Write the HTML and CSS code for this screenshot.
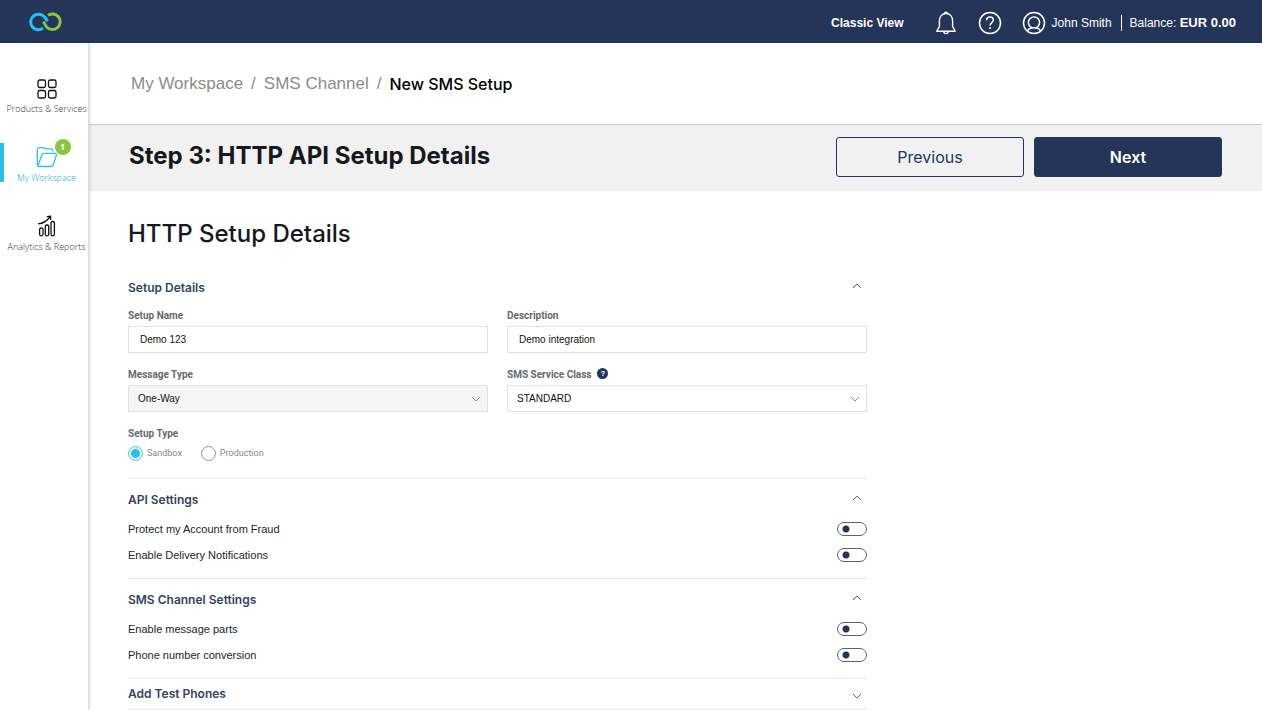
FILE: index.html
```html
<!DOCTYPE html>
<html lang="en">
<head>
<meta charset="utf-8">
<meta name="viewport" content="width=device-width, initial-scale=1">
<title>New SMS Setup</title>
<link rel="stylesheet" href="styles.css">
</head>
<body>
<header class="topbar">
  <a class="logo" href="#" aria-label="Home">
    <svg width="34" height="22" viewBox="0 0 34 22" fill="none" stroke-width="3">
      <path d="M14 17.300A7.800 7.800 0 1 1 15.200 5.600C16.600 7 17.200 8.800 18.800 10.200" stroke="#27bfee"/>
      <path d="M19 4.300A7.800 7.800 0 1 1 17.800 16.200C16.200 14.600 16 12.600 14.200 10.800" stroke="#8cc63f"/>
    </svg>
  </a>
  <nav class="topnav">
    <a class="classic" href="#">Classic View</a>
    <button class="icon-btn bell" aria-label="Notifications">
      <svg width="22" height="26" viewBox="0 0 22 26" fill="none" stroke="#fff" stroke-width="1.4" stroke-linejoin="round">
        <path d="M9.400 3.400a1.700 1.700 0 0 1 3.200 0M4.400 16.500V11C4.400 6.600 7 3.500 11 3.500s6.600 3.100 6.600 7.500v5.500l2.600 4.700H1.800zM8.700 21.300a2.300 2.300 0 0 0 4.600 0"/>
      </svg>
    </button>
    <button class="icon-btn help" aria-label="Help">
      <svg width="24" height="24" viewBox="0 0 24 24" fill="none" stroke="#fff" stroke-width="1.5">
        <circle cx="12" cy="12" r="10.500"/>
        <path d="M8.700 9.300c0-2 1.400-3.200 3.300-3.200s3.300 1.200 3.300 3c0 2.400-3.200 2.700-3.200 5.500"/>
        <path d="M12 16v2"/>
      </svg>
    </button>
    <a class="account" href="#">
      <svg width="24" height="24" viewBox="0 0 24 24" fill="none" stroke="#fff" stroke-width="1.500">
        <circle cx="12" cy="12" r="10.500"/>
        <circle cx="12" cy="11.500" r="5.600"/>
        <path d="M5.200 20c1-2 2.700-2.600 4.600-3.200M18.800 20c-1-2-2.700-2.600-4.600-3.200"/>
      </svg>
      <span>John Smith</span>
    </a>
    <span class="balance">Balance: <strong>EUR 0.00</strong></span>
  </nav>
</header>
<div class="shell">
  <nav class="sidebar">
    <a class="side-item" href="#">
      <svg width="20" height="20" viewBox="0 0 20 20" fill="none" stroke="#111" stroke-width="1.300">
        <rect x="1" y="1" width="7.500" height="7.500" rx="1.800"/><rect x="11.500" y="1" width="7.500" height="7.500" rx="1.800"/>
        <rect x="1" y="11.500" width="7.500" height="7.500" rx="1.800"/><rect x="11.500" y="11.500" width="7.500" height="7.500" rx="1.800"/>
      </svg>
      <span>Products &amp; Services</span>
    </a>
    <a class="side-item active" href="#">
      <span class="side-icon">
        <svg width="22" height="22" viewBox="0 0 22 22" fill="none" stroke="#2bbfe6" stroke-width="1.300" stroke-linejoin="round">
          <path d="M16.800 5.500V4.600c0-1-.6-1.700-1.700-1.700H9.500L8.200 1.600H3.200c-1.200 0-1.900.7-1.900 1.900v14.700c0 1.400.8 2.300 2.100 2.300H15c1.200 0 1.900-.6 2.200-1.600l3.100-9.500c.4-1.200-.2-2-1.400-2H8c-1 0-1.700.5-2 1.400L2 19.400"/>
        </svg>
        <span class="badge">1</span>
      </span>
      <span>My Workspace</span>
    </a>
    <a class="side-item" href="#">
      <svg width="20" height="22" viewBox="0 0 20 22" fill="none" stroke="#111" stroke-width="1.300">
        <rect x="2.600" y="13" width="3.400" height="7.800" rx="1.500"/><rect x="8.300" y="10" width="3.400" height="10.800" rx="1.500"/><rect x="14" y="6.500" width="3.400" height="14.300" rx="1.500"/>
        <path d="M1 8.800c5.500-.3 8.500-2.300 12-6.800M9.800 1.700l3.700-.4.300 3.600"/>
      </svg>
      <span>Analytics &amp; Reports</span>
    </a>
  </nav>
  <main class="main">
    <nav class="crumbs" aria-label="Breadcrumb">
      <a href="#">My Workspace</a><span>/</span><a href="#">SMS Channel</a><span>/</span><strong>New SMS Setup</strong>
    </nav>
    <div class="stepbar">
      <h1>Step 3: HTTP API Setup Details</h1>
      <div class="actions">
        <button class="btn">Previous</button>
        <button class="btn primary">Next</button>
      </div>
    </div>
    <form class="setup">
      <h2>HTTP Setup Details</h2>
      <section class="panel details">
        <div class="panel-head">
          <h3>Setup Details</h3>
          <button type="button" class="toggle-panel" aria-label="Collapse Setup Details"><svg width="10" height="6" viewBox="0 0 10 6"><path d="M1 5l4-4 4 4"/></svg></button>
        </div>
        <div class="fields">
          <div class="field">
            <label for="name">Setup Name</label>
            <input class="control" id="name" type="text" value="Demo 123">
          </div>
          <div class="field">
            <label for="desc">Description</label>
            <input class="control" id="desc" type="text" value="Demo integration">
          </div>
          <div class="field">
            <label for="type">Message Type</label>
            <div class="select muted">
              <select class="control" id="type"><option>One-Way</option></select>
              <svg width="10" height="6" viewBox="0 0 10 6"><path d="M1 1l4 4 4-4"/></svg>
            </div>
          </div>
          <div class="field">
            <div class="label-row">
              <label for="class">SMS Service Class</label>
              <button type="button" class="hint" aria-label="About service class">?</button>
            </div>
            <div class="select">
              <select class="control" id="class"><option>STANDARD</option></select>
              <svg width="10" height="6" viewBox="0 0 10 6"><path d="M1 1l4 4 4-4"/></svg>
            </div>
          </div>
          <fieldset class="field">
            <legend>Setup Type</legend>
            <div class="radios">
              <label><input type="radio" name="setup" checked>Sandbox</label>
              <label><input type="radio" name="setup">Production</label>
            </div>
          </fieldset>
        </div>
      </section>
      <section class="panel">
        <div class="panel-head">
          <h3>API Settings</h3>
          <button type="button" class="toggle-panel" aria-label="Collapse API Settings"><svg width="10" height="6" viewBox="0 0 10 6"><path d="M1 5l4-4 4 4"/></svg></button>
        </div>
        <label class="row">Protect my Account from Fraud<input class="switch" type="checkbox"></label>
        <label class="row">Enable Delivery Notifications<input class="switch" type="checkbox"></label>
      </section>
      <section class="panel">
        <div class="panel-head">
          <h3>SMS Channel Settings</h3>
          <button type="button" class="toggle-panel" aria-label="Collapse SMS Channel Settings"><svg width="10" height="6" viewBox="0 0 10 6"><path d="M1 5l4-4 4 4"/></svg></button>
        </div>
        <label class="row">Enable message parts<input class="switch" type="checkbox"></label>
        <label class="row">Phone number conversion<input class="switch" type="checkbox"></label>
      </section>
      <section class="panel collapsed">
        <div class="panel-head">
          <h3>Add Test Phones</h3>
          <button type="button" class="toggle-panel" aria-label="Expand Add Test Phones"><svg width="10" height="6" viewBox="0 0 10 6"><path d="M1 1l4 4 4-4"/></svg></button>
        </div>
      </section>
    </form>
  </main>
</div>
</body>
</html>
```
FILE: styles.css
```css
* { box-sizing: border-box; }
body {
  margin: 0;
  min-height: 100vh;
  display: flex;
  flex-direction: column;
  background: #fff;
  color: #16181d;
  font-family: "Liberation Sans", Arial, sans-serif;
}
a { color: inherit; text-decoration: none; }
button { font: inherit; cursor: pointer; }
h1, h2, h3 { margin: 0; }
svg { display: block; flex: none; }

.topbar {
  height: 43px;
  padding: 0 26px 0 29px;
  display: flex;
  align-items: center;
  justify-content: space-between;
  background: #243559;
  color: #fff;
}
.topnav { display: flex; align-items: center; font-size: 12px; line-height: 16px; padding-top: 3px; }
.classic { font-weight: 700; margin-right: 31px; }
.icon-btn { padding: 0; border: 0; background: none; }
.bell { margin-right: 21px; }
.help { margin-right: 20px; }
.account { display: flex; align-items: center; gap: 6px; }
.balance { margin-left: 9px; padding-left: 8px; border-left: 1px solid #fff; }
.balance strong { font-size: 13px; }

.shell { flex: 1; display: flex; }
.sidebar {
  position: relative;
  flex: none;
  width: 89px;
  padding-top: 31px;
  border-right: 1px solid #dcdcdc;
  box-shadow: 1px 0 3px rgba(0, 0, 0, .15);
  background: #fff;
}
.side-item {
  display: flex;
  flex-direction: column;
  align-items: center;
  justify-content: flex-end;
  gap: 4px;
  height: 39px;
  margin-bottom: 30px;
  padding: 2px 0 0 5px;
  color: #33363a;
  font: 300 9px/8px "Open Sans", "Noto Sans", sans-serif;
  white-space: nowrap;
}
.side-item > svg + span, .side-icon + span { padding-top: 2px; }
.active { color: #12a9d6; border-left: 4px solid #2bbfe6; padding-left: 1px; }
.side-icon { position: relative; }
.badge {
  position: absolute;
  left: 19px;
  top: -7px;
  width: 16px;
  height: 16px;
  border-radius: 50%;
  background: #8cc63f;
  color: #fff;
  font-weight: 700;
  line-height: 16px;
  text-align: center;
}

.main { flex: 1; min-width: 0; }
.crumbs {
  height: 81px;
  padding: 1px 42px 0;
  display: flex;
  align-items: center;
  gap: 8px;
  color: #8b8b8b;
  font-size: 17px;
}
.crumbs strong { color: #000; font: 500 16px "Inter", sans-serif; }
.stepbar {
  height: 66px;
  padding: 0 40px 2px;
  display: flex;
  align-items: center;
  justify-content: space-between;
  background: #f1f1f1;
  border-top: 1px solid #ccc;
  box-shadow: 0 1px 2px rgba(0, 0, 0, .1);
}
.stepbar h1 { font: 700 24px/30px "Inter", sans-serif; padding-bottom: 2px; }
.actions { display: flex; gap: 10px; }
.btn {
  width: 188px;
  height: 40px;
  border: 1px solid #243559;
  border-radius: 3px;
  background: none;
  color: #243559;
  font: 400 16px "Inter", sans-serif;
}
.primary { background: #243559; color: #fff; font-weight: 600; }

.setup { max-width: 818px; padding: 28px 40px 0 39px; }
.setup h2 { font: 500 24px/32px "Inter", sans-serif; margin-bottom: 24px; }
.panel { padding: 7px 0 10px; border-bottom: 1px solid #e4e6e9; }
.details { padding: 0 0 17px; }
.collapsed { padding: 0; }
.panel-head { height: 28px; margin-bottom: 2px; display: flex; align-items: center; justify-content: space-between; }
.details .panel-head { margin-bottom: 7px; }
.collapsed .panel-head { height: 30px; margin-bottom: 0; }
.panel h3 { color: #34435c; font: 600 12px/16px "Inter", sans-serif; }
.toggle-panel { padding: 4px 5px 8px; border: 0; background: none; }
.collapsed .toggle-panel { padding: 8px 5px 4px; }
.toggle-panel svg, .select svg { fill: none; stroke: #666; stroke-width: 1; }

.fields { display: grid; grid-template-columns: 1fr 1fr; gap: 15px 19px; }
.field {
  min-width: 0;
  margin: 0;
  padding: 0;
  border: 0;
  display: flex;
  flex-direction: column;
  gap: 3px;
  color: #66696d;
  font: 10px/14px Roboto, sans-serif;
}
.field > label, .field legend, .label-row { font-weight: 700; height: 14px; padding: 0; }
.field legend { margin-bottom: 4px; }
.label-row { display: flex; align-items: center; gap: 6px; }
.hint {
  width: 11px;
  height: 11px;
  margin-bottom: 4px;
  padding: 0;
  border: 0;
  border-radius: 50%;
  background: #243559;
  color: #fff;
  font-size: 8px;
  line-height: 11px;
}
.control {
  width: 100%;
  height: 27px;
  padding: 0 11px;
  border: 1px solid #dfe1e3;
  border-radius: 0;
  background: #fff;
  color: #111;
  font: 10px "Liberation Sans", Arial, sans-serif;
}
.select { display: grid; align-items: center; }
.select > * { grid-area: 1 / 1; }
.select .control { appearance: none; padding: 0 9px; }
.select svg { justify-self: end; margin-right: 7px; pointer-events: none; stroke: #888; }
.muted .control { background: #f5f5f5; }
.radios { display: flex; gap: 19px; height: 16px; align-items: center; color: #7f8894; font-size: 9px; }
.radios label { display: flex; align-items: center; gap: 4px; }
.radios input {
  appearance: none;
  width: 15px;
  height: 15px;
  margin: 0;
  border: 1px solid #8a929d;
  border-radius: 50%;
}
.radios input:checked { border-color: #58c3dc; background: radial-gradient(circle, #2bbfe6 4px, #e2f7fb 5px); }

.row { height: 26px; display: flex; align-items: center; justify-content: space-between; color: #222529; font-size: 11px; line-height: 16px; }
.switch {
  appearance: none;
  width: 30px;
  height: 14px;
  margin: 0;
  border: 1px solid #596273;
  border-radius: 7px;
  background: radial-gradient(circle at 8px 6px, #243559 3px, transparent 4px);
}
.switch:checked { background: radial-gradient(circle at 20px 6px, #243559 3px, transparent 4px); }
```
